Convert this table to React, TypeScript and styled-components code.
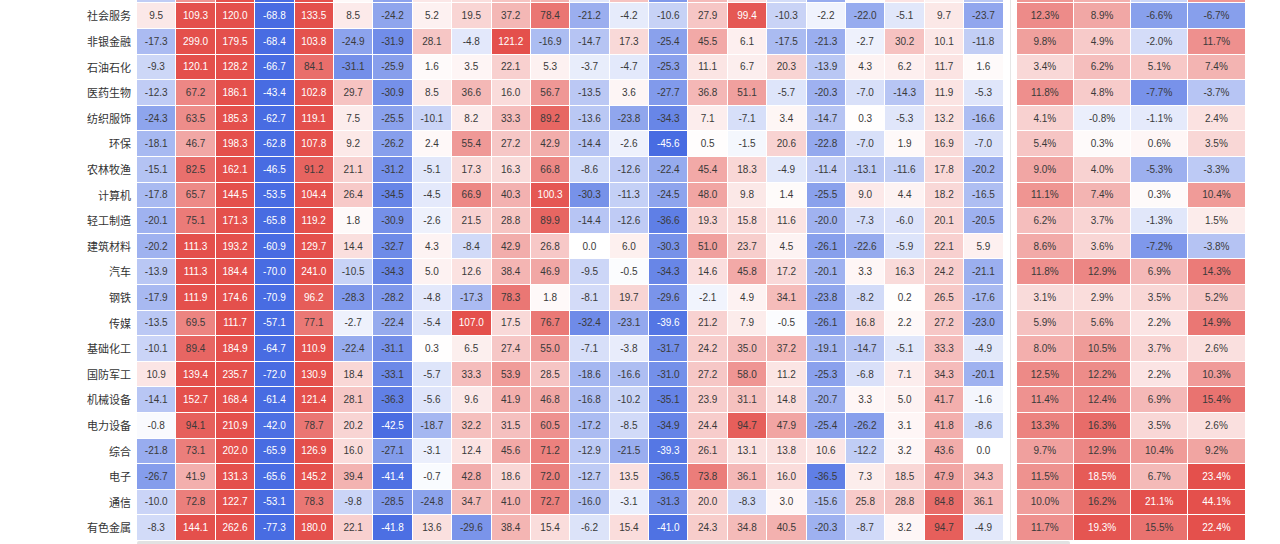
import * as React from 'react';
import styled, { createGlobalStyle } from 'styled-components';

// 行业热力表：22 个区间涨跌幅 + 4 个百分比列
interface IRow {
    name: string
    values: number[]
    pct: number[]
    clipped?: boolean
}

const rows: IRow[] = [
    // 滚动到顶部之外的一行，只露出色块
    { name: '美容护理', clipped: true, values: [-12.0, 60.0, 150.0, -70.0, 110.0, 2.0, -25.0, 10.0, 15.0, 30.0, 40.0, -5.0, 30.0, -28.0, 35.0, 15.0, -8.0, -22.0, 1.0, 12.0, 5.0, -14.0], pct: [11.0, 8.0, -2.5, 11.0] },
    { name: '社会服务', values: [9.5, 109.3, 120.0, -68.8, 133.5, 8.5, -24.2, 5.2, 19.5, 37.2, 78.4, -21.2, -4.2, -10.6, 27.9, 99.4, -10.3, -2.2, -22.0, -5.1, 9.7, -23.7], pct: [12.3, 8.9, -6.6, -6.7] },
    { name: '非银金融', values: [-17.3, 299.0, 179.5, -68.4, 103.8, -24.9, -31.9, 28.1, -4.8, 121.2, -16.9, -14.7, 17.3, -25.4, 45.5, 6.1, -17.5, -21.3, -2.7, 30.2, 10.1, -11.8], pct: [9.8, 4.9, -2.0, 11.7] },
    { name: '石油石化', values: [-9.3, 120.1, 128.2, -66.7, 84.1, -31.1, -25.9, 1.6, 3.5, 22.1, 5.3, -3.7, -4.7, -25.3, 11.1, 6.7, 20.3, -13.9, 4.3, 6.2, 11.7, 1.6], pct: [3.4, 6.2, 5.1, 7.4] },
    { name: '医药生物', values: [-12.3, 67.2, 186.1, -43.4, 102.8, 29.7, -30.9, 8.5, 36.6, 16.0, 56.7, -13.5, 3.6, -27.7, 36.8, 51.1, -5.7, -20.3, -7.0, -14.3, 11.9, -5.3], pct: [11.8, 4.8, -7.7, -3.7] },
    { name: '纺织服饰', values: [-24.3, 63.5, 185.3, -62.7, 119.1, 7.5, -25.5, -10.1, 8.2, 33.3, 89.2, -13.6, -23.8, -34.3, 7.1, -7.1, 3.4, -14.7, 0.3, -5.3, 13.2, -16.6], pct: [4.1, -0.8, -1.1, 2.4] },
    { name: '环保', values: [-18.1, 46.7, 198.3, -62.8, 107.8, 9.2, -26.2, 2.4, 55.4, 27.2, 42.9, -14.4, -2.6, -45.6, 0.5, -1.5, 20.6, -22.8, -7.0, 1.9, 16.9, -7.0], pct: [5.4, 0.3, 0.6, 3.5] },
    { name: '农林牧渔', values: [-15.1, 82.5, 162.1, -46.5, 91.2, 21.1, -31.2, -5.1, 17.3, 16.3, 66.8, -8.6, -12.6, -22.4, 45.4, 18.3, -4.9, -11.4, -13.1, -11.6, 17.8, -20.2], pct: [9.0, 4.0, -5.3, -3.3] },
    { name: '计算机', values: [-17.8, 65.7, 144.5, -53.5, 104.4, 26.4, -34.5, -4.5, 66.9, 40.3, 100.3, -30.3, -11.3, -24.5, 48.0, 9.8, 1.4, -25.5, 9.0, 4.4, 18.2, -16.5], pct: [11.1, 7.4, 0.3, 10.4] },
    { name: '轻工制造', values: [-20.1, 75.1, 171.3, -65.8, 119.2, 1.8, -30.9, -2.6, 21.5, 28.8, 89.9, -14.4, -12.6, -36.6, 19.3, 15.8, 11.6, -20.0, -7.3, -6.0, 20.1, -20.5], pct: [6.2, 3.7, -1.3, 1.5] },
    { name: '建筑材料', values: [-20.2, 111.3, 193.2, -60.9, 129.7, 14.4, -32.7, 4.3, -8.4, 42.9, 26.8, 0.0, 6.0, -30.3, 51.0, 23.7, 4.5, -26.1, -22.6, -5.9, 22.1, 5.9], pct: [8.6, 3.6, -7.2, -3.8] },
    { name: '汽车', values: [-13.9, 111.3, 184.4, -70.0, 241.0, -10.5, -34.3, 5.0, 12.6, 38.4, 46.9, -9.5, -0.5, -34.3, 14.6, 45.8, 17.2, -20.1, 3.3, 16.3, 24.2, -21.1], pct: [11.8, 12.9, 6.9, 14.3] },
    { name: '钢铁', values: [-17.9, 111.9, 174.6, -70.9, 96.2, -28.3, -28.2, -4.8, -17.3, 78.3, 1.8, -8.1, 19.7, -29.6, -2.1, 4.9, 34.1, -23.8, -8.2, 0.2, 26.5, -17.6], pct: [3.1, 2.9, 3.5, 5.2] },
    { name: '传媒', values: [-13.5, 69.5, 111.7, -57.1, 77.1, -2.7, -22.4, -5.4, 107.0, 17.5, 76.7, -32.4, -23.1, -39.6, 21.2, 7.9, -0.5, -26.1, 16.8, 2.2, 27.2, -23.0], pct: [5.9, 5.6, 2.2, 14.9] },
    { name: '基础化工', values: [-10.1, 89.4, 184.9, -64.7, 110.9, -22.4, -31.1, 0.3, 6.5, 27.4, 55.0, -7.1, -3.8, -31.7, 24.2, 35.0, 37.2, -19.1, -14.7, -5.1, 33.3, -4.9], pct: [8.0, 10.5, 3.7, 2.6] },
    { name: '国防军工', values: [10.9, 139.4, 235.7, -72.0, 130.9, 18.4, -33.1, -5.7, 33.3, 53.9, 28.5, -18.6, -16.6, -31.0, 27.2, 58.0, 11.2, -25.3, -6.8, 7.1, 34.3, -20.1], pct: [12.5, 12.2, 2.2, 10.3] },
    { name: '机械设备', values: [-14.1, 152.7, 168.4, -61.4, 121.4, 28.1, -36.3, -5.6, 9.6, 41.9, 46.8, -16.8, -10.2, -35.1, 23.9, 31.1, 14.8, -20.7, 3.3, 5.0, 41.7, -1.6], pct: [11.4, 12.4, 6.9, 15.4] },
    { name: '电力设备', values: [-0.8, 94.1, 210.9, -42.0, 78.7, 20.2, -42.5, -18.7, 32.2, 31.5, 60.5, -17.2, -8.5, -34.9, 24.4, 94.7, 47.9, -25.4, -26.2, 3.1, 41.8, -8.6], pct: [13.3, 16.3, 3.5, 2.6] },
    { name: '综合', values: [-21.8, 73.1, 202.0, -65.9, 126.9, 16.0, -27.1, -3.1, 12.4, 45.6, 71.2, -12.9, -21.5, -39.3, 26.1, 13.1, 13.8, 10.6, -12.2, 3.2, 43.6, 0.0], pct: [9.7, 12.9, 10.4, 9.2] },
    { name: '电子', values: [-26.7, 41.9, 131.3, -65.6, 145.2, 39.4, -41.4, -0.7, 42.8, 18.6, 72.0, -12.7, 13.5, -36.5, 73.8, 36.1, 16.0, -36.5, 7.3, 18.5, 47.9, 34.3], pct: [11.5, 18.5, 6.7, 23.4] },
    { name: '通信', values: [-10.0, 72.8, 122.7, -53.1, 78.3, -9.8, -28.5, -24.8, 34.7, 41.0, 72.7, -16.0, -3.1, -31.3, 20.0, -8.3, 3.0, -15.6, 25.8, 28.8, 84.8, 36.1], pct: [10.0, 16.2, 21.1, 44.1] },
    { name: '有色金属', values: [-8.3, 144.1, 262.6, -77.3, 180.0, 22.1, -41.8, 13.6, -29.6, 38.4, 15.4, -6.2, 15.4, -41.0, 24.3, 34.8, 40.5, -20.3, -8.7, 3.2, 94.7, -4.9], pct: [11.7, 19.3, 15.5, 22.4] },
]

const RED = [228, 80, 76]
const BLUE = [72, 108, 226]

// 色阶：正值 -> 红，负值 -> 蓝
interface IScale { pos: number, neg: number, hiPos: number, hiNeg: number }
const numScale: IScale = { pos: 105, neg: 43, hiPos: 95, hiNeg: 38.5 }
const pctScale: IScale = { pos: 20, neg: 11, hiPos: 17.5, hiNeg: 10 }

const mix = (c: number[], t: number) => {
    const k = Math.pow(Math.min(1, Math.max(0, t)), 0.85)
    const ch = c.map(x => Math.round(255 - (255 - x) * k))
    return `rgb(${ch[0]}, ${ch[1]}, ${ch[2]})`
}
const tone = (v: number, s: IScale) => v >= 0 ? mix(RED, v / s.pos) : mix(BLUE, -v / s.neg)
const isLight = (v: number, s: IScale) => v >= s.hiPos || v <= -s.hiNeg

export default function App() {
    return <>
        <GlobalStyle />
        <$Wrapper>
            <HeatTable>
                {rows.map(row => <Row key={row.name}>
                    <Label>{row.clipped ? '' : row.name}</Label>
                    {row.values.map((v, i) => <Cell key={i} $bg={tone(v, numScale)} $light={isLight(v, numScale)}>
                        {row.clipped ? null : v.toFixed(1)}
                    </Cell>)}
                    <Divider />
                    {row.pct.map((v, i) => <Cell key={'p' + i} $wide $bg={tone(v, pctScale)} $light={isLight(v, pctScale)}>
                        {row.clipped ? null : v.toFixed(1) + '%'}
                    </Cell>)}
                </Row>)}
            </HeatTable>
            <ScrollBar />
        </$Wrapper>
    </>
}

const GlobalStyle = createGlobalStyle`
    html, body {
        margin : 0;
        padding : 0;
        background : #fff;
    }
    body {
        font-family : "Liberation Sans", "Noto Sans CJK SC", sans-serif;
        overflow : hidden;
    }
`

const $Wrapper = styled.div`
    width : 1280px;
    height : 544px;
    overflow : hidden;
    background : #fff;
`

const HeatTable = styled.div`
    display : flex;
    flex-direction : column;
    margin-top : -22.2px;
`

const Row = styled.div`
    display : flex;
    height : 25.6px;
`

const Label = styled.div`
    width : 137px;
    box-sizing : border-box;
    padding-right : 6px;
    text-align : right;
    line-height : 25.6px;
    font-size : 11px;
    color : #333;
    font-family : "Noto Sans CJK SC", sans-serif;
    white-space : nowrap;
`

const Cell = styled.div<{ $bg: string, $light: boolean, $wide?: boolean }>`
    width : ${p => p.$wide ? 57.2 : 39.4}px;
    flex : none;
    box-sizing : border-box;
    border-right : 1px solid #fff;
    border-bottom : 1px solid #fff;
    background : ${p => p.$bg};
    color : ${p => p.$light ? '#fff' : '#3a3a3a'};
    font-size : 10px;
    display : flex;
    align-items : center;
    justify-content : center;
`

const Divider = styled.div`
    flex : none;
    width : 1px;
    margin : 0 6.2px 0 6px;
    background : #e6e6e6;
`

const ScrollBar = styled.div`
    margin-left : 137px;
    width : 933px;
    height : 4px;
    border-radius : 2px;
    background : #e2e2e2;
`
